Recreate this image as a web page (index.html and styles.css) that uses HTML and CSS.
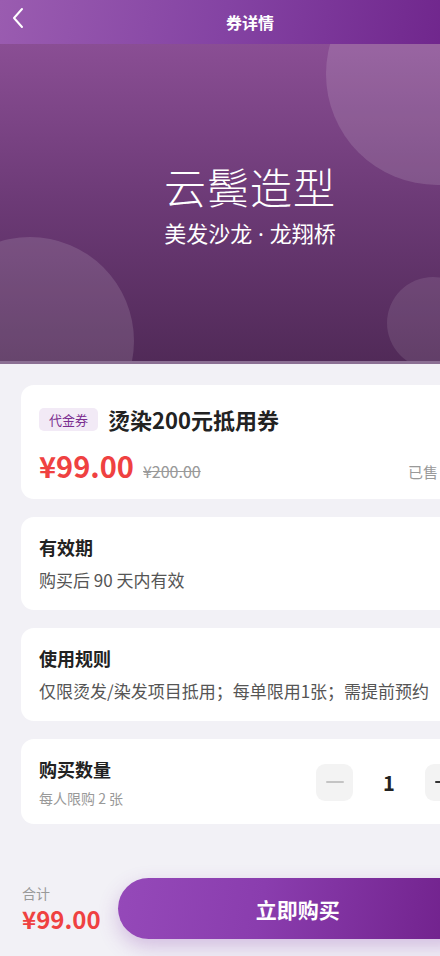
FILE: index.html
```html
<!DOCTYPE html>
<html lang="zh-CN">
<head>
<meta charset="utf-8">
<meta name="viewport" content="width=device-width, initial-scale=1">
<title>券详情</title>
<link rel="stylesheet" href="styles.css">
</head>
<body>
<div class="app">
  <header class="topbar">
    <span class="back">
      <svg width="14" height="22" viewBox="0 0 14 22" fill="none"><path d="M11 2 L3 11 L11 20" stroke="#fff" stroke-width="2" stroke-linecap="round" stroke-linejoin="round"/></svg>
    </span>
    <h1 class="topbar-title">券详情</h1>
  </header>

  <section class="hero">
    <span class="bubble bubble-tr"></span>
    <span class="bubble bubble-bl"></span>
    <span class="bubble bubble-br"></span>
    <div class="hero-text">
      <div class="hero-name">云鬓造型</div>
      <div class="hero-sub">美发沙龙 · 龙翔桥</div>
    </div>
  </section>

  <main class="content">
    <div class="card card-main">
      <div class="title-row">
        <span class="tag">代金券</span>
        <span class="coupon-name">烫染200元抵用券</span>
      </div>
      <div class="price-row">
        <span class="price">¥99.00</span>
        <span class="orig">¥200.00</span>
        <span class="sold">已售 86</span>
      </div>
    </div>

    <div class="card">
      <div class="card-title">有效期</div>
      <div class="card-text">购买后 90 天内有效</div>
    </div>

    <div class="card">
      <div class="card-title">使用规则</div>
      <div class="card-text">仅限烫发/染发项目抵用；每单限用1张；需提前预约</div>
    </div>

    <div class="card card-qty">
      <div class="qty-info">
        <div class="card-title">购买数量</div>
        <div class="qty-note">每人限购 2 张</div>
      </div>
      <div class="stepper">
        <span class="step-btn"><span class="minus"></span></span>
        <span class="qty">1</span>
        <span class="step-btn step-plus"><span class="minus"></span><span class="plus-v"></span></span>
      </div>
    </div>
  </main>

  <footer class="footer">
    <div class="total">
      <div class="total-label">合计</div>
      <div class="total-price">¥99.00</div>
    </div>
    <button class="buy">立即购买</button>
  </footer>
</div>
</body>
</html>
```

FILE: styles.css
```css
html, body {
  margin: 0;
  padding: 0;
  overflow: hidden;
  background: #f2f1f6;
}
body {
  font-family: "Noto Sans CJK SC", "Noto Sans", sans-serif;
  color: #222;
}
.app {
  width: 500px;
  min-height: 956px;
  display: flex;
  flex-direction: column;
}
.topbar {
  height: 44px;
  display: flex;
  align-items: center;
  justify-content: center;
  background: linear-gradient(100deg, #9a5cb0 0%, #8443a3 45%, #6b1f87 100%);
  position: relative;
}
.back {
  position: absolute;
  left: 11px;
  top: 7px;
  display: flex;
}
.topbar-title {
  margin: 0;
  font-size: 16px;
  font-weight: 700;
  color: #fff;
  line-height: 44px;
}
.hero {
  height: 317px;
  position: relative;
  overflow: hidden;
  background: linear-gradient(180deg, #8a4e94 0%, #6c3a76 50%, #512a58 100%);
  border-bottom: 3px solid #8b6f93;
  display: flex;
  align-items: center;
  justify-content: center;
}
.bubble {
  position: absolute;
  border-radius: 50%;
  background: rgba(255, 255, 255, 0.13);
}
.bubble-tr {
  width: 222px;
  height: 222px;
  left: 326px;
  top: -81px;
}
.bubble-bl {
  width: 208px;
  height: 208px;
  left: -74px;
  top: 193px;
}
.bubble-br {
  width: 92px;
  height: 92px;
  left: 387px;
  top: 233px;
  background: rgba(255, 255, 255, 0.1);
}
.hero-text {
  position: relative;
  text-align: center;
  color: #fff;
  margin-top: 0;
}
.hero-name {
  font-size: 42px;
  font-weight: 300;
  line-height: 56px;
  letter-spacing: 1px;
}
.hero-sub {
  font-family: "Noto Sans", "Noto Sans CJK SC", sans-serif;
  font-size: 22px;
  font-weight: 400;
  line-height: 30px;
  margin-top: 4px;
}
.content {
  padding: 21px 20px 0 21px;
  display: flex;
  flex-direction: column;
  gap: 18px;
}
.card {
  background: #fff;
  border-radius: 13px;
  padding: 17px 18px;
}
.card-main {
  padding-top: 20px;
  padding-bottom: 14px;
}
.title-row {
  display: flex;
  align-items: center;
  gap: 10px;
}
.tag {
  background: #f2eaf6;
  color: #7a2c8f;
  font-size: 13px;
  line-height: 23px;
  padding: 0 10px;
  border-radius: 5px;
}
.coupon-name {
  font-size: 22px;
  font-weight: 700;
  color: #222;
  line-height: 28px;
}
.price-row {
  display: flex;
  align-items: baseline;
  margin-top: 12px;
}
.price {
  font-size: 29px;
  font-weight: 700;
  color: #ef4141;
  line-height: 40px;
}
.orig {
  font-size: 16px;
  color: #999;
  text-decoration: line-through;
  margin-left: 9px;
}
.sold {
  margin-left: auto;
  margin-right: 4px;
  font-size: 15px;
  color: #999;
}
.card-title {
  font-size: 18px;
  font-weight: 700;
  color: #222;
  line-height: 26px;
}
.card-text {
  font-size: 17px;
  color: #555;
  line-height: 26px;
  margin-top: 7px;
}
.card-qty {
  display: flex;
  align-items: center;
  justify-content: space-between;
  padding-top: 17px;
  padding-bottom: 16px;
}
.qty-note {
  font-size: 14px;
  color: #999;
  line-height: 20px;
  margin-top: 6px;
}
.stepper {
  display: flex;
  align-items: center;
}
.step-btn {
  width: 37px;
  height: 37px;
  border-radius: 9px;
  background: #f3f3f3;
  position: relative;
  display: flex;
  align-items: center;
  justify-content: center;
}
.minus {
  width: 18px;
  height: 2px;
  background: #c4c4c4;
  border-radius: 1px;
}
.plus-v {
  position: absolute;
  width: 2px;
  height: 18px;
  background: #333;
  border-radius: 1px;
}
.step-plus .minus {
  background: #333;
}
.qty {
  width: 72px;
  text-align: center;
  font-size: 20px;
  font-weight: 700;
  color: #222;
}
.footer {
  margin-top: auto;
  display: flex;
  align-items: center;
  gap: 17px;
  padding: 0 22px 17px 22px;
}
.total-label {
  font-size: 14px;
  color: #999;
  line-height: 20px;
}
.total-price {
  font-size: 24px;
  font-weight: 700;
  color: #ef4141;
  line-height: 32px;
}
.buy {
  flex: 1;
  height: 61px;
  border: none;
  border-radius: 31px;
  background: linear-gradient(100deg, #9549b9 0%, #8a3dae 40%, #6e1e88 100%);
  box-shadow: 0 8px 20px rgba(140, 70, 175, 0.3);
  color: #fff;
  font-family: "Noto Sans CJK SC", "Noto Sans", sans-serif;
  font-size: 21px;
  font-weight: 700;
}
```
